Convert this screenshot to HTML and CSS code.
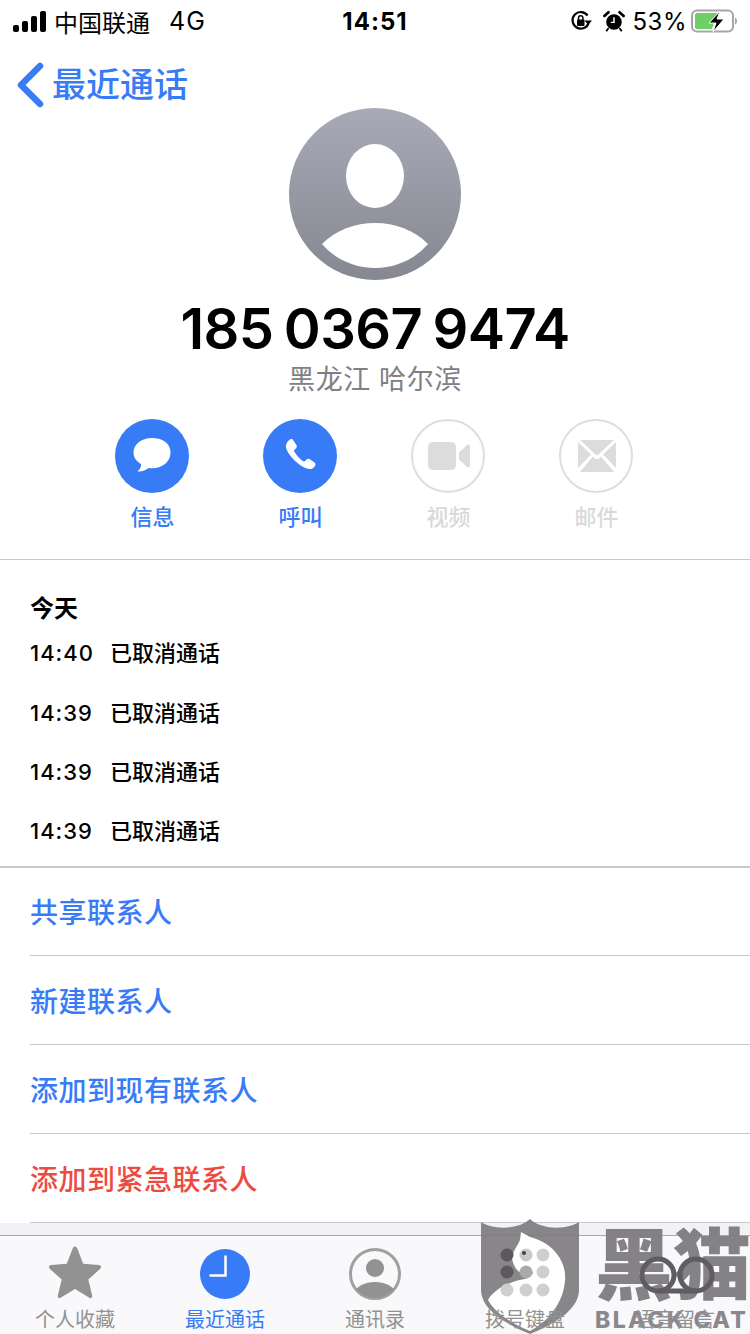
FILE: index.html
```html
<!DOCTYPE html>
<html lang="zh-CN">
<head>
    <meta charset="UTF-8">
    <meta name="viewport" content="width=device-width, initial-scale=1.0">
    <title>最近通话</title>
    <link rel="stylesheet" href="styles.css">
</head>
<body>
    <div class="page">
        <div class="status-bar">
            <div class="status-left">
                <div class="signal"><i class="s1"></i><i class="s2"></i><i class="s3"></i><i class="s4"></i></div>
                <span class="carrier">中国联通</span>
                <span class="network">4G</span>
            </div>
            <div class="status-time">14:51</div>
            <div class="status-right">
                <svg class="status-icon" width="24" height="24" viewBox="0 0 24 24">
                    <path d="M19.5 14.5A8.3 8.3 0 1 1 18.6 6.5" fill="none" stroke="#000" stroke-width="2.2"/>
                    <path d="M15.5 11.5h7.5l-3.7 4.6z" fill="#000"/>
                    <rect x="8" y="10.5" width="7.5" height="6.5" rx="1" fill="#000"/>
                    <path d="M9.5 11V9a2.2 2.2 0 0 1 4.4 0v2" fill="none" stroke="#000" stroke-width="1.5"/>
                </svg>
                <svg class="status-icon alarm" width="22" height="24" viewBox="0 0 24 24">
                    <circle cx="12" cy="13" r="8.5" fill="#000"/>
                    <path d="M1.5 6.5 6 2.5M22.5 6.5 18 2.5" stroke="#000" stroke-width="3" stroke-linecap="round"/>
                    <path d="M5.5 20.5 4 22.5M18.5 20.5 20 22.5" stroke="#000" stroke-width="2" stroke-linecap="round"/>
                    <path d="M12 8v5.5H8.5" fill="none" stroke="#fff" stroke-width="1.6"/>
                </svg>
                <span class="battery-text">53%</span>
                <svg class="battery" width="47" height="24" viewBox="0 0 47 24">
                    <rect x="1" y="1.5" width="41" height="21" rx="5" fill="none" stroke="#a5a5a5" stroke-width="2"/>
                    <path d="M44 8.500c1.500 .5 2 2 2 3.500s-.5 3-2 3.500z" fill="#a5a5a5"/>
                    <path d="M4 6a2 2 0 0 1 2-2h20l-5 16H6a2 2 0 0 1-2-2z" fill="#6cd066"/>
                    <path d="M29 2 18 14h7l-3 9 11-13h-7z" fill="#000" stroke="#fff" stroke-width="1"/>
                </svg>
            </div>
        </div>

        <div class="nav-bar">
            <svg class="back-arrow" width="30" height="46" viewBox="0 0 30 46">
                <path d="M25 4 6 23l19 19" fill="none" stroke="#377bf6" stroke-width="6.500" stroke-linecap="round" stroke-linejoin="round"/>
            </svg>
            <span class="back-text">最近通话</span>
        </div>

        <div class="contact">
            <svg class="avatar" width="172" height="172" viewBox="0 0 172 172">
                <defs>
                    <linearGradient id="avatar-bg" x1="0" y1="0" x2="0" y2="1">
                        <stop offset="0" stop-color="#a8abb7"/>
                        <stop offset="1" stop-color="#858892"/>
                    </linearGradient>
                </defs>
                <circle cx="86" cy="86" r="86" fill="url(#avatar-bg)"/>
                <ellipse cx="86" cy="68" rx="29" ry="32" fill="#fff"/>
                <path d="M33 136C47 122 66 115 86 115s39 7 53 21c-13 15-32 24-53 24s-40-9-53-24z" fill="#fff"/>
            </svg>
            <div class="number">185 0367 9474</div>
            <div class="region">黑龙江 哈尔滨</div>
        </div>

        <div class="actions">
            <div class="action">
                <div class="action-circle on">
                    <svg width="42" height="40" viewBox="0 0 42 40">
                        <path d="M21 2C10 2 2.500 8.500 2.500 16.500c0 5 3 9 7.500 11.500.5 2.500-1 5-3.500 7.500 4 .5 8-1 11-3.500 1 .2 2.500 .3 3.500 .3 11 0 18.500-7 18.500-15.800S32 2 21 2z" fill="#fff"/>
                    </svg>
                </div>
                <span class="action-label">信息</span>
            </div>
            <div class="action">
                <div class="action-circle on">
                    <svg class="nudge" width="36" height="36" viewBox="0 0 36 36">
                        <path d="M7 1.500c1.300-.8 2.600-.3 3.400 .9l3 4.600c.7 1.100 .5 2.300-.4 3.200l-1.500 1.500c-.5 .5-.5 1.100-.2 1.700 2 3.600 5.800 7.800 9 9.800 .6 .4 1.200 .3 1.700-.2l1.500-1.500c1-.9 2.200-1 3.300-.3l4.400 3c1.200 .8 1.700 2.200 .9 3.500-1.300 2.200-3.600 3.800-6.400 3.300C17.500 29.500 6 18.500 3.200 10.500 2.200 6.800 4.400 3 7 1.500z" fill="#fff"/>
                    </svg>
                </div>
                <span class="action-label">呼叫</span>
            </div>
            <div class="action off">
                <div class="action-circle">
                    <svg class="nudge" width="42" height="28" viewBox="0 0 42 28">
                        <rect x="0" y="0" width="28" height="28" rx="5" fill="#dcdcdc"/>
                        <path d="M31 10.500 39 3c1-.8 3-.4 3 1.500v19c0 1.900-2 2.300-3 1.500l-8-7.500z" fill="#dcdcdc"/>
                    </svg>
                </div>
                <span class="action-label">视频</span>
            </div>
            <div class="action off">
                <div class="action-circle">
                    <svg class="nudge" width="38" height="32" viewBox="0 0 38 32">
                        <path d="M2 0h34L20.500 14.500c-.9 .7-2.100 .7-3 0z" fill="#dcdcdc"/>
                        <path d="M0 2v26l13-13.500zM38 2v26L25 14.500z" fill="#dcdcdc"/>
                        <path d="M2 32l13-15.500 2 2c1.200 1 2.800 1 4 0l2-2L36 32z" fill="#dcdcdc"/>
                    </svg>
                </div>
                <span class="action-label">邮件</span>
            </div>
        </div>

        <div class="history">
            <div class="history-title">今天</div>
            <div class="call first"><span class="call-time">14:40</span><span>已取消通话</span></div>
            <div class="call"><span class="call-time">14:39</span><span>已取消通话</span></div>
            <div class="call"><span class="call-time">14:39</span><span>已取消通话</span></div>
            <div class="call"><span class="call-time">14:39</span><span>已取消通话</span></div>
        </div>

        <div class="links">
            <div class="link">共享联系人</div>
            <div class="link">新建联系人</div>
            <div class="link">添加到现有联系人</div>
            <div class="link danger">添加到紧急联系人</div>
        </div>

        <div class="band"></div>

        <div class="tab-bar">
            <div class="tab">
                <svg width="54" height="54" viewBox="0 2 58 54" preserveAspectRatio="none">
                    <path d="M29 1.500c1.300 0 2 .8 2.500 2l6.300 15.300 16.800 1.300c2.500 .2 3 2.300 1.600 3.600L43.300 34.600l4.100 16c.5 2-1.400 3.200-3 2.200L29 43.900l-15.400 8.900c-1.600 1-3.500-.2-3-2.200l4.100-16L1.800 23.700C.4 22.400 .9 20.300 3.400 20.100l16.800-1.300 6.300-15.300c.5-1.200 1.200-2 2.500-2z" fill="#929292"/>
                </svg>
                <span class="tab-label">个人收藏</span>
            </div>
            <div class="tab active">
                <svg width="54" height="54" viewBox="0 0 54 54">
                    <circle cx="27" cy="27" r="25" fill="#377bf6"/>
                    <path d="M27.500 9.500v19H12.500" fill="none" stroke="#fff" stroke-width="2.500" stroke-linecap="round"/>
                </svg>
                <span class="tab-label">最近通话</span>
            </div>
            <div class="tab">
                <svg width="54" height="54" viewBox="0 0 54 54">
                    <defs><clipPath id="contact-clip"><circle cx="27" cy="27" r="24"/></clipPath></defs>
                    <circle cx="27" cy="27" r="24.500" fill="none" stroke="#a0a0a0" stroke-width="3"/>
                    <circle cx="27" cy="21" r="9" fill="#929292"/>
                    <ellipse cx="27" cy="48" rx="21" ry="13" fill="#929292" clip-path="url(#contact-clip)"/>
                </svg>
                <span class="tab-label">通讯录</span>
            </div>
            <div class="tab">
                <div class="tab-blank"></div>
                <span class="tab-label">拨号键盘</span>
            </div>
            <div class="tab">
                <div class="tab-blank"></div>
                <span class="tab-label">语音留言</span>
            </div>
        </div>

        <!-- watermark over the tab bar -->
        <div class="watermark">
            <svg class="wm-shield" width="100" height="116" viewBox="0 0 100 116">
                <path d="M0 3C10 10 36 12 49 0 62 12 88 10 98 3V72C97 90 76 104 49 115 22 104 1 90 0 72z" fill="#7f7c80" fill-opacity=".92"/>
                <path d="M40 13 49 18C72 24 86 42 84 62 82 84 68 102 49 112 30 104 14 94 7 81 13 70 30 62 44 60 50 58 52 55 52 53 46 56 40 54 37 52 33 48 31 42 31 38 33 30 37 26 39 21z" fill="#fff"/>
                <circle cx="26" cy="36" r="6.500" fill="#5b595c"/><circle cx="45" cy="36" r="6.500" fill="#c9c9c9"/><circle cx="62" cy="36" r="6.500" fill="#cfcfcf"/>
                <circle cx="26" cy="53" r="6.500" fill="#5b595c"/><circle cx="45" cy="53" r="6.500" fill="#aaa"/><circle cx="62" cy="53" r="6.500" fill="#cfcfcf"/>
                <circle cx="26" cy="71" r="6.500" fill="#cfcfcf"/><circle cx="45" cy="71" r="6.500" fill="#cfcfcf"/><circle cx="62" cy="71" r="6.500" fill="#cfcfcf"/>
                <circle cx="43" cy="34" r="2" fill="#444"/>
            </svg>
            <div class="wm-text">
                <div class="wm-cn">黑猫</div>
                <div class="wm-en">BLACK CAT</div>
            </div>
            <svg class="wm-q" width="80" height="42" viewBox="0 0 80 42">
                <circle cx="20" cy="19" r="16" fill="none" stroke="#5f5d60" stroke-width="5"/>
                <circle cx="58" cy="19" r="16" fill="none" stroke="#5f5d60" stroke-width="5"/>
                <path d="M20 35h38" stroke="#5f5d60" stroke-width="5" fill="none"/>
            </svg>
        </div>
    </div>
</body>
</html>
```

FILE: styles.css
```css
* {
    box-sizing: border-box;
}
html, body {
    margin: 0;
    padding: 0;
}
body {
    font-family: "Inter", "Noto Sans CJK SC", sans-serif;
    background-color: #fff;
    color: #000;
}
.page {
    position: relative;
    width: 750px;
    height: 1334px;
    overflow: hidden;
    background: #fff;
}

/* status bar */
.status-bar {
    display: flex;
    justify-content: space-between;
    align-items: center;
    height: 42px;
    padding: 0 12px 0 13px;
    position: relative;
}
.status-left {
    display: flex;
    align-items: center;
    font-size: 24px;
}
.signal {
    display: flex;
    align-items: flex-end;
    gap: 3px;
    height: 21px;
    margin-right: 8px;
}
.signal i {
    display: block;
    width: 6px;
    background: #000;
    border-radius: 2px;
}
.s1 { height: 7px; }
.s2 { height: 11px; }
.s3 { height: 16px; }
.s4 { height: 21px; }
.network {
    margin-left: 19px;
    font-size: 25px;
    letter-spacing: 1px;
}
.status-time {
    position: absolute;
    left: 0;
    right: 0;
    text-align: center;
    font-size: 24px;
    font-weight: 700;
    letter-spacing: 1px;
}
.status-right {
    display: flex;
    align-items: center;
}
.status-icon {
    margin-right: 10px;
}
.status-icon.alarm {
    margin-right: 8px;
}
.battery-text {
    font-size: 24px;
    letter-spacing: .5px;
    margin-right: 4px;
}

/* nav */
.nav-bar {
    display: flex;
    align-items: center;
    height: 66px;
    padding-left: 15px;
    padding-top: 19px;
}
.back-arrow {
    margin-right: 7px;
}
.back-text {
    font-size: 34px;
    line-height: 46px;
    color: #377bf6;
    font-weight: 500;
}

/* contact */
.contact {
    display: flex;
    flex-direction: column;
    align-items: center;
}
.avatar {
    display: block;
}
.number {
    margin-top: 18px;
    font-size: 56px;
    line-height: 62px;
    font-weight: 600;
    letter-spacing: -.6px;
    word-spacing: -3px;
}
.region {
    margin-top: 3px;
    font-size: 27px;
    line-height: 34px;
    color: #808084;
    letter-spacing: .6px;
}

/* action buttons */
.actions {
    display: flex;
    justify-content: center;
    gap: 74px;
    margin-top: 22px;
    padding-right: 3px;
    height: 141px;
    border-bottom: 1px solid #c8c8ca;
}
.action {
    display: flex;
    flex-direction: column;
    align-items: center;
    width: 74px;
}
.action-circle {
    display: flex;
    justify-content: center;
    align-items: center;
    width: 74px;
    height: 74px;
    border-radius: 50%;
    border: 2px solid #dedede;
}
.action-circle.on {
    background: #377bf6;
    border: none;
}
.nudge {
    margin-left: 2px;
}
.action-label {
    margin-top: 9px;
    padding-left: 2px;
    font-size: 22px;
    line-height: 30px;
    font-weight: 500;
    color: #377bf6;
}
.off .action-label {
    color: #d9d9d9;
}

/* call history */
.history {
    padding: 34px 0 0 30px;
    height: 306px;
    font-size: 22px;
}
.history-title {
    font-size: 24px;
    font-weight: 600;
    line-height: 30px;
}
.call {
    display: flex;
    align-items: center;
    height: 59px;
    line-height: 30px;
    font-weight: 500;
}
.call.first {
    height: 30px;
    margin: 14px 0 15px;
}
.call-time {
    width: 80px;
    letter-spacing: 1px;
}

/* links */
.links {
    border-top: 2px solid #c8c8ca;
}
.link {
    display: flex;
    align-items: center;
    height: 89px;
    margin-left: 30px;
    font-size: 28px;
    letter-spacing: .5px;
    font-weight: 500;
    color: #377bf6;
    border-bottom: 1px solid #c8c8ca;
}
.link:first-child {
    height: 88px;
    padding-bottom: 2px;
}
.link.danger {
    color: #ec4b3f;
}

/* tab bar */
.band {
    height: 13px;
    background: #f2f2f6;
    border-bottom: 1px solid #a9a9ad;
}
.tab-bar {
    display: grid;
    grid-template-columns: repeat(5, 150px);
    height: 99px;
    background: #f9f9fb;
}
.tab {
    display: flex;
    flex-direction: column;
    align-items: center;
    padding-top: 11px;
}
.tab svg, .tab-blank {
    display: block;
    height: 54px;
    overflow: visible;
}
.tab-label {
    position: relative;
    z-index: 2;
    margin-top: 6px;
    font-size: 20px;
    line-height: 26px;
    color: #929292;
}
.active .tab-label {
    color: #377bf6;
}

/* watermark */
.watermark {
    position: absolute;
    left: 481px;
    top: 1219px;
    width: 269px;
    height: 115px;
}
.wm-shield {
    position: absolute;
    left: 0;
    top: 0;
}
.wm-text {
    position: absolute;
    left: 114px;
    top: 5px;
    color: #7f7c80;
}
.wm-cn {
    font-size: 78px;
    line-height: 84px;
    font-weight: 900;
    white-space: nowrap;
    opacity: .95;
}
.wm-en {
    font-size: 23px;
    line-height: 24px;
    font-weight: 800;
    letter-spacing: 2.400px;
    white-space: nowrap;
    opacity: .9;
}
.wm-q {
    position: absolute;
    left: 157px;
    top: 37px;
}
```
